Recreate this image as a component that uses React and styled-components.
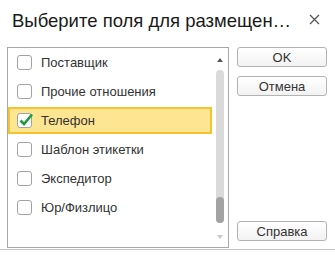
import React from "react";
import styled, { createGlobalStyle } from "styled-components";

const Global = createGlobalStyle`
  html, body { margin: 0; padding: 0; background: #fff; }
  body { font-family: Arial, "Liberation Sans", sans-serif; }
`;

const Window = styled.div`
  width: 335px;
  height: 258px;
  box-sizing: border-box;
  display: flex;
  flex-direction: column;
  background: #fff;
`;

const TitleBar = styled.div`
  height: 40px;
  display: flex;
  align-items: center;
  padding: 0 0 0 12px;
  box-sizing: border-box;
`;

const Title = styled.div`
  flex: 1;
  font-size: 18.5px;
  color: #1a1a1a;
  white-space: nowrap;
  overflow: hidden;
  padding-top: 1px;
`;

const Close = styled.div`
  width: 30px;
  height: 30px;
  display: flex;
  align-items: center;
  justify-content: center;
  margin-right: 6px;
  margin-top: -2px;
`;

const Body = styled.div`
  display: flex;
  gap: 8px;
  padding: 7px 8px 0 7px;
  height: 201px;
  box-sizing: border-box;
`;

const ListBox = styled.div`
  width: 222px;
  height: 201px;
  box-sizing: border-box;
  border: 1px solid #a8a8a8;
  display: flex;
`;

const Rows = styled.div`
  flex: 1;
  display: flex;
  flex-direction: column;
`;

const Row = styled.div`
  height: 29px;
  display: flex;
  align-items: center;
`;

const RowInner = styled.div`
  height: 27px;
  width: 100%;
  box-sizing: border-box;
  display: flex;
  align-items: center;
  padding-left: ${(p) => (p.$selected ? "7px" : "9px")};
  gap: 9px;
  background: ${(p) => (p.$selected ? "#fde591" : "transparent")};
  border: ${(p) => (p.$selected ? "2px solid #f4c430" : "none")};
`;

const Box = styled.div`
  width: 15px;
  height: 15px;
  box-sizing: border-box;
  border: 1px solid #a3a3a3;
  border-radius: 3px;
  background: #fff;
  position: relative;
  flex-shrink: 0;
`;

const Check = styled.svg`
  position: absolute;
  left: 0px;
  top: -2px;
`;

const Label = styled.span`
  font-size: 13px;
  color: #333;
`;

const Scroll = styled.div`
  width: 15px;
  display: flex;
  flex-direction: column;
  align-items: center;
  padding-right: 1px;
`;

const Arrow = styled.div`
  width: 0;
  height: 0;
  border-left: 3px solid transparent;
  border-right: 3px solid transparent;
  ${(p) =>
    p.$up
      ? "border-bottom: 4px solid #555; margin-top: 10px;"
      : "border-top: 4px solid #c8c8c8; margin-top: 12px;"}
`;

const Track = styled.div`
  width: 8px;
  margin-top: 8px;
  height: 153px;
  border-radius: 4px;
  background: #dadada;
  display: flex;
  flex-direction: column;
  justify-content: flex-end;
`;

const Thumb = styled.div`
  width: 8px;
  height: 26px;
  border-radius: 4px;
  background: #a3a3a3;
`;

const Buttons = styled.div`
  width: 90px;
  display: flex;
  flex-direction: column;
  gap: 9px;
`;

const Button = styled.div`
  height: 20px;
  box-sizing: border-box;
  border: 1px solid #b3b3b3;
  border-radius: 3px;
  background: linear-gradient(#ffffff, #f2f2f2);
  display: flex;
  align-items: center;
  justify-content: center;
  font-size: 13px;
  color: #333;
  ${(p) => (p.$bottom ? "margin-top: auto;" : "")}
`;

const BottomLine = styled.div`
  margin-top: 8px;
  height: 1px;
  background: #c4c4c4;
`;

const items = [
  "Поставщик",
  "Прочие отношения",
  "Телефон",
  "Шаблон этикетки",
  "Экспедитор",
  "Юр/Физлицо",
];

export default function App() {
  return (
    <Window>
      <Global />
      <TitleBar>
        <Title>Выберите поля для размещен…</Title>
        <Close>
          <svg width="11" height="11" viewBox="0 0 11 11">
            <path d="M1 1L10 10M10 1L1 10" stroke="#555" strokeWidth="1.3" />
          </svg>
        </Close>
      </TitleBar>
      <Body>
        <ListBox>
          <Rows>
            {items.map((t, i) => {
              const sel = i === 2;
              return (
                <Row key={t}>
                  <RowInner $selected={sel}>
                    <Box>
                      {sel && (
                        <Check width="17" height="15" viewBox="0 0 17 15">
                          <path
                            d="M2.5 8.5L6 12L14 2.5"
                            fill="none"
                            stroke="#1f9a3c"
                            strokeWidth="2.6"
                          />
                        </Check>
                      )}
                    </Box>
                    <Label>{t}</Label>
                  </RowInner>
                </Row>
              );
            })}
          </Rows>
          <Scroll>
            <Arrow $up />
            <Track>
              <Thumb />
            </Track>
            <Arrow />
          </Scroll>
        </ListBox>
        <Buttons>
          <Button>OK</Button>
          <Button>Отмена</Button>
          <Button $bottom>Справка</Button>
        </Buttons>
      </Body>
      <BottomLine />
    </Window>
  );
}
